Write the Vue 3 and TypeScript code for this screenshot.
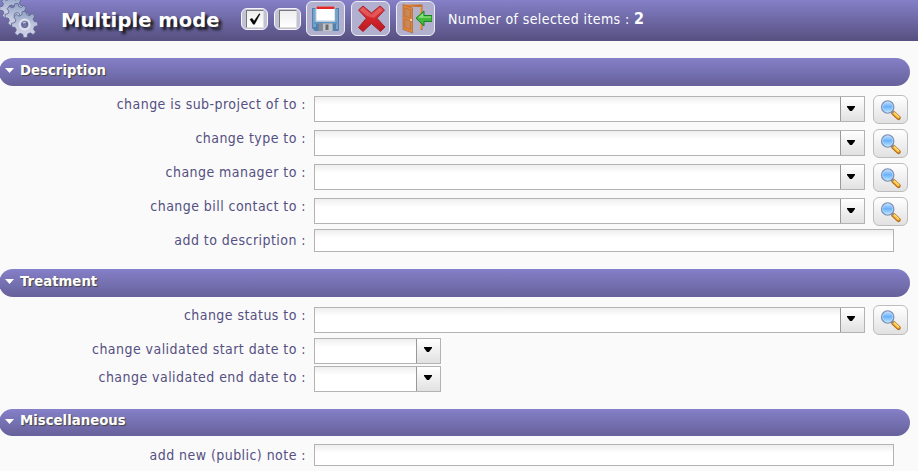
<script setup lang="ts">
import { ref } from 'vue'

type Kind = 'select' | 'date' | 'text'
interface Field { label: string; kind: Kind }
interface Section { title: string; size: string; fields: Field[] }

const selectedCount = ref(2)

const sections: Section[] = [
  {
    title: 'Description',
    size: 'description',
    fields: [
      { label: 'change is sub-project of to', kind: 'select' },
      { label: 'change type to', kind: 'select' },
      { label: 'change manager to', kind: 'select' },
      { label: 'change bill contact to', kind: 'select' },
      { label: 'add to description', kind: 'text' },
    ],
  },
  {
    title: 'Treatment',
    size: 'treatment',
    fields: [
      { label: 'change status to', kind: 'select' },
      { label: 'change validated start date to', kind: 'date' },
      { label: 'change validated end date to', kind: 'date' },
    ],
  },
  {
    title: 'Miscellaneous',
    size: 'misc',
    fields: [{ label: 'add new (public) note', kind: 'text' }],
  },
]

// Eight-toothed cog with a round hole
function gear(cx: number, cy: number, r: number): string {
  const teeth = 8
  const pts: string[] = []
  for (let i = 0; i < teeth; i++) {
    const a = (i / teeth) * Math.PI * 2 - 0.05
    for (const [da, k] of [[-0.25, 0.76], [-0.14, 1], [0.14, 1], [0.25, 0.76]]) {
      pts.push(`${(cx + Math.cos(a + da) * r * k).toFixed(2)} ${(cy + Math.sin(a + da) * r * k).toFixed(2)}`)
    }
  }
  const h = r * 0.24
  return `M${pts.join('L')}ZM${cx - h} ${cy}a${h} ${h} 0 1 0 ${h * 2} 0a${h} ${h} 0 1 0 ${-h * 2} 0Z`
}
const gears = [gear(11.5, 8, 12), gear(17, 15.5, 12), gear(24.7, 24.5, 13.2)]
</script>

<template>
  <div class="page">
    <svg width="0" height="0" class="defs" aria-hidden="true">
      <defs>
        <linearGradient id="steel" x1="0" y1="0" x2="0" y2="1">
          <stop offset="0" stop-color="#8fa3c6" /><stop offset=".6" stop-color="#c5c9e0" /><stop offset="1" stop-color="#cfd0e6" />
        </linearGradient>
        <linearGradient id="lens" x1="0" y1="0" x2="0" y2="1">
          <stop offset="0" stop-color="#c9e5ff" /><stop offset=".48" stop-color="#69b1fa" /><stop offset="1" stop-color="#c0f0ff" />
        </linearGradient>
        <linearGradient id="red" x1="0" y1="0" x2="0" y2="1">
          <stop offset="0" stop-color="#e04848" /><stop offset=".5" stop-color="#d3262c" /><stop offset="1" stop-color="#b9191f" />
        </linearGradient>
        <linearGradient id="wood" x1="0" y1="0" x2="1" y2="0">
          <stop offset="0" stop-color="#e69148" /><stop offset="1" stop-color="#bd6626" />
        </linearGradient>
      </defs>
    </svg>

    <header class="toolbar">
      <svg class="gears" width="40" height="40" viewBox="0 0 40 40">
        <path v-for="(d, i) in gears" :key="i" :d="d" fill="url(#steel)" fill-rule="evenodd" stroke="#59648c" stroke-width=".8" stroke-linejoin="round" />
        <circle cx="24.7" cy="24.5" r="5" fill="none" stroke="#dfe1ef" stroke-width="1.8" />
        <path d="M22 25.8A3 3 0 0 0 27.4 25.8L25 22.5Z" fill="#7474a5" />
      </svg>
      <h1>Multiple mode</h1>
      <div class="checks">
        <button class="check" aria-label="Select all"><span><svg width="16" height="16" viewBox="0 0 16 16"><path d="M3 8.3L5.2 7.4L7 10.3L12.3 2.8L13 3.1L7.5 13.2H6.2Z" fill="#050505" stroke="#050505" stroke-width=".5" /></svg></span></button>
        <button class="check" aria-label="Unselect all"><span></span></button>
      </div>
      <div class="actions">
        <button class="tool" aria-label="Save">
          <svg width="32" height="32" viewBox="0 0 32 32">
            <path d="M2 5H29V27Q29 28 28 28H5L2 25Z" fill="#4f80ae" />
            <path d="M3 6H6V24H3ZM26 6H28V26H26Z" fill="#76a3cb" />
            <path d="M5.5 3H25.5V19H5.5Z" fill="#b9cbdd" />
            <path d="M6.5 5H24.5V17.5H6.5Z" fill="#fff" />
            <path d="M6.5 3.5H24.5V6H6.5Z" fill="#e52628" />
            <path d="M4 19H27V21H4Z" fill="#5b94c5" />
            <path d="M8.5 20H23V28H8.5Z" fill="#858b96" />
            <path d="M13 20.5H22.5V28H13Z" fill="#c0c3c7" /><path d="M15.5 21.5H18.5V27H15.5Z" fill="#686b70" />
          </svg>
        </button>
        <button class="tool" aria-label="Cancel">
          <svg width="32" height="32" viewBox="0 0 32 32">
            <path d="M3.5 7L8 3L16.5 10L25 3L29.5 7L22 15.3L30 24L25.5 28.5L16.4 20.5L8 28.5L3.5 24.5L11.3 15.3Z" fill="url(#red)" stroke="#a6222a" stroke-linejoin="round" />
            <path d="M5 7L8 4.5L16.4 11.4L25 4.5L27.7 7L19 15L12 13Z" fill="#ef7777" opacity=".5" />
          </svg>
        </button>
        <button class="tool" aria-label="Exit">
          <svg width="32" height="32" viewBox="0 0 32 32">
            <path d="M3 1.5H22.5V27H3Z" fill="url(#wood)" />
            <path d="M6 4H20.5V29H6Z" fill="#b4b2c7" /><path d="M20 3.5H21.5V26H20Z" fill="#e6a05c" />
            <path d="M3 1.5L12.5 5V30L3 26.5Z" fill="#e1863c" stroke="#aa5e25" stroke-width=".6" />
            <path d="M4.8 5L10.6 7V15L4.8 13.5ZM4.8 16L10.6 17.8V26.5L4.8 24.5Z" fill="#ca8858" stroke="#b5652c" stroke-width=".6" />
            <path d="M10 16L12 16.6V18L10 17.4Z" fill="#fff0c5" />
            <path d="M16 15.2L24 8V12.5H32V18.4H24V23Z" fill="#43b83e" stroke="#17831e" stroke-linejoin="round" />
            <path d="M18 14.8L23.2 10V13.5H31V14.8Z" fill="#8be07b" />
          </svg>
        </button>
      </div>
      <p class="count">Number of selected items : <strong>{{ selectedCount }}</strong></p>
    </header>

    <section v-for="section in sections" :key="section.title" :class="section.size">
      <h2><i class="fold"></i><span>{{ section.title }}</span></h2>
      <div class="fields">
        <div v-for="field in section.fields" :key="field.label" class="row" :class="field.kind">
          <label>{{ field.label }} :</label>
          <div class="control"><span v-if="field.kind !== 'text'" class="drop"><i></i></span></div>
          <button v-if="field.kind === 'select'" class="search" aria-label="Search">
            <svg width="22" height="22" viewBox="0 0 22 22">
              <path d="M13.2 13.8L18.6 18.8" stroke="#b66d1d" stroke-width="4.4" stroke-linecap="round" />
              <path d="M13.6 13.8L18.4 18.2" stroke="#ffc342" stroke-width="2.6" stroke-linecap="round" />
              <path d="M14.2 13.6L18.8 17.7" stroke="#fff0a0" stroke-width=".8" />
              <path d="M11 11.6L13.5 14.1" stroke="#8790a2" stroke-width="2" />
              <circle cx="7.7" cy="8" r="6.1" fill="url(#lens)" stroke="#7c8fb5" stroke-width="1.4" />
              <circle cx="7.7" cy="8" r="5.1" fill="none" stroke="#c4dcff" stroke-width=".7" />
            </svg>
          </button>
        </div>
      </div>
    </section>
  </div>
</template>

<style>
body { background: #fafafa; overflow: hidden; }
</style>
<style scoped>
* { box-sizing: border-box; }
.page { width: 918px; height: 471px; overflow: hidden; background: #fafafa; font-family: "DejaVu Sans Condensed", "DejaVu Sans", sans-serif; font-size: 14px; letter-spacing: .45px; color: #545081; }
.defs { position: absolute; }
h1, h2, p { margin: 0; letter-spacing: 0; }
button { padding: 0; font: inherit; }
svg { display: block; flex: none; }
.toolbar { height: 41px; display: flex; background: linear-gradient(#8580c8, #565080); color: #fff; }
.gears { width: 40px; }
h1 { width: 201px; padding-left: 21px; font: bold 19.5px/42px "DejaVu Sans", sans-serif; letter-spacing: .08px; text-shadow: 3px 3px 3px #111; white-space: nowrap; }
.checks { display: flex; gap: 6px; padding-top: 8px; width: 65px; }
.check { width: 27px; height: 22px; flex: none; border: 1px solid #f5f5fa; border-radius: 6px; background: #c3c1d5; display: grid; place-items: center; }
.check span { width: 18px; height: 18px; border: 1px solid #777; border-right-color: #ddd; border-bottom-color: #ddd; background: linear-gradient(#eee, #fff); }
.actions { display: flex; gap: 6px; padding-top: 1px; }
.tool { width: 39px; height: 35px; border: 1px solid #eeeef8; border-radius: 6px; background: #b2b0cf; display: grid; place-items: center; }
.count { padding-left: 13px; line-height: 38px; white-space: pre; letter-spacing: .4px; }
.count strong { font-size: 16px; line-height: 1; }
section h2 { width: 911px; height: 28px; margin-left: -1px; border-radius: 14px; background: linear-gradient(#8580c8, #66619a); color: #fff; font: bold 13.3px/26px "DejaVu Sans", sans-serif; text-shadow: 1px 1px 1px #444; display: flex; align-items: flex-start; gap: 6px; padding-left: 6px; }
.fold { width: 9px; height: 5px; margin-top: 10px; background: #fff; clip-path: polygon(0 0, 100% 0, 50% 100%); }
.description { margin-top: 17px; }
.treatment { margin-top: 17px; }
.misc { margin-top: 15px; }
.misc h2 { height: 27px; line-height: 24px; }
.fields { padding-top: 7px; }
.misc .fields { padding-top: 8px; }
.row { display: grid; grid-template-columns: 306px 580px 24px; column-gap: 8px; height: 34px; align-items: start; }
.row.select { grid-template-columns: 306px 551px 35px; }
.row.date { grid-template-columns: 306px 127px; height: 28px; }
.row.text { height: 23px; }
.misc .row.text { height: 22px; }
label { text-align: right; line-height: 22px; white-space: nowrap; }
.control { height: 26px; border: 1px solid #b3b3b3; background: linear-gradient(#eee, #fff 8px); display: flex; justify-content: flex-end; }
.select .control { margin-top: 3px; }
.text .control { height: 100%; }
.drop { width: 24px; border-left: 1px solid #999; background: linear-gradient(#fff, #e1e1e1); padding: 9px 0 0 6px; }
.date .drop { padding: 8px 0 0 7px; }
.drop i { display: block; width: 8px; height: 5px; background: #000; clip-path: polygon(0 0, 100% 0, 100% 20%, 62% 100%, 38% 100%, 0 20%); }
.treatment .select .drop { padding-top: 8px; }
.search { width: 35px; height: 29px; margin-top: 2px; border: 1px solid #bdbdbd; border-radius: 6px; background: linear-gradient(#fff, #e1e1e1); display: grid; place-items: center; }
.treatment .search { height: 30px; margin-top: 1px; }
</style>
